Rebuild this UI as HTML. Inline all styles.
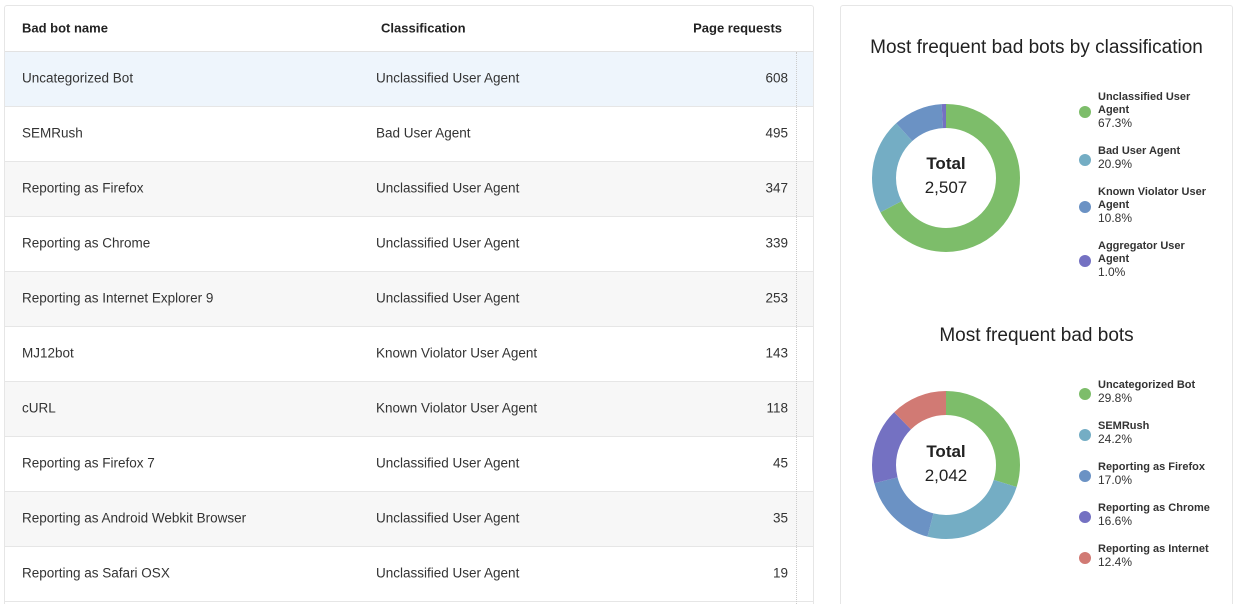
<!DOCTYPE html>
<html><head><style>
*{margin:0;padding:0;box-sizing:border-box}
html,body{width:1236px;height:604px;overflow:hidden}
body{background:#fff;font-family:"Liberation Sans",sans-serif;color:#333;position:relative}
.lp{position:absolute;left:4px;top:5px;width:810px;height:599px;border:1px solid #e6e6e6;border-bottom:none;border-radius:3px 3px 0 0;background:#fff;overflow:hidden}
.hd{position:absolute;left:0;top:0;width:100%;height:46px;border-bottom:1px solid #e2e2e2;font-size:13px;font-weight:bold;color:#222}
.row{position:absolute;left:0;width:100%;height:55px;border-bottom:1px solid #e6e6e6;font-size:13.5px;color:#333}
.c1{position:absolute;left:17px;top:calc(50% - 1px);transform:translateY(-50%)}
.c2{position:absolute;left:371px;top:calc(50% - 1px);transform:translateY(-50%)}
.c3{position:absolute;right:25px;top:calc(50% - 1px);transform:translateY(-50%)}
.vl{position:absolute;left:791px;top:46px;width:0;height:600px;border-left:1px dotted #ccc}
.rp{position:absolute;left:840px;top:5px;width:393px;height:599px;border:1px solid #e6e6e6;border-bottom:none;border-radius:3px 3px 0 0;background:#fff}
.t{position:absolute;width:100%;text-align:center;font-size:19px;color:#222}
.lg{position:absolute;left:257px;font-size:11px;font-weight:bold;color:#333;line-height:13px}
.lg span{font-weight:normal;font-size:12px}
.dot{position:absolute;left:-19px;width:12px;height:12px;border-radius:50%}
.tot{position:absolute;width:100px;text-align:center;left:55px}
</style></head><body>
<div class="lp">
<div class="hd"><span class="c1">Bad bot name</span><span class="c2" style="left:376px">Classification</span><span class="c3" style="right:31px">Page requests</span></div>
<div class="row" style="top:46px;background:#eef5fc"><span class="c1">Uncategorized Bot</span><span class="c2">Unclassified User Agent</span><span class="c3">608</span></div>
<div class="row" style="top:101px"><span class="c1">SEMRush</span><span class="c2">Bad User Agent</span><span class="c3">495</span></div>
<div class="row" style="top:156px;background:#f7f7f7"><span class="c1">Reporting as Firefox</span><span class="c2">Unclassified User Agent</span><span class="c3">347</span></div>
<div class="row" style="top:211px"><span class="c1">Reporting as Chrome</span><span class="c2">Unclassified User Agent</span><span class="c3">339</span></div>
<div class="row" style="top:266px;background:#f7f7f7"><span class="c1">Reporting as Internet Explorer 9</span><span class="c2">Unclassified User Agent</span><span class="c3">253</span></div>
<div class="row" style="top:321px"><span class="c1">MJ12bot</span><span class="c2">Known Violator User Agent</span><span class="c3">143</span></div>
<div class="row" style="top:376px;background:#f7f7f7"><span class="c1">cURL</span><span class="c2">Known Violator User Agent</span><span class="c3">118</span></div>
<div class="row" style="top:431px"><span class="c1">Reporting as Firefox 7</span><span class="c2">Unclassified User Agent</span><span class="c3">45</span></div>
<div class="row" style="top:486px;background:#f7f7f7"><span class="c1">Reporting as Android Webkit Browser</span><span class="c2">Unclassified User Agent</span><span class="c3">35</span></div>
<div class="row" style="top:541px"><span class="c1">Reporting as Safari OSX</span><span class="c2">Unclassified User Agent</span><span class="c3">19</span></div>
<div class="vl"></div>
</div>
<div class="rp">
<div class="t" style="top:31px">Most frequent bad bots by classification</div>
<svg style="position:absolute;left:30px;top:97px" width="150" height="150" viewBox="0 0 150 150">
<g transform="rotate(-90 75 75)" fill="none" stroke-width="24">
<circle cx="75" cy="75" r="62" stroke="#7dbd6a" stroke-dasharray="262.2 389.6" stroke-dashoffset="0"/>
<circle cx="75" cy="75" r="62" stroke="#74adc4" stroke-dasharray="81.4 389.6" stroke-dashoffset="-262.2"/>
<circle cx="75" cy="75" r="62" stroke="#6b92c4" stroke-dasharray="42.1 389.6" stroke-dashoffset="-343.6"/>
<circle cx="75" cy="75" r="62" stroke="#7471c2" stroke-dasharray="3.9 389.6" stroke-dashoffset="-385.7"/>
</g></svg>
<div class="tot" style="top:148px;font-size:17px;font-weight:bold;color:#222">Total</div>
<div class="tot" style="top:172px;font-size:17px;color:#222">2,507</div>
<div class="lg" style="top:85px"><i class="dot" style="top:15px;background:#7dbd6a"></i>Unclassified User<br>Agent<br><span>67.3%</span></div>
<div class="lg" style="top:139px"><i class="dot" style="top:9px;background:#74adc4"></i>Bad User Agent<br><span>20.9%</span></div>
<div class="lg" style="top:180px"><i class="dot" style="top:15px;background:#6b92c4"></i>Known Violator User<br>Agent<br><span>10.8%</span></div>
<div class="lg" style="top:234px"><i class="dot" style="top:15px;background:#7471c2"></i>Aggregator User<br>Agent<br><span>1.0%</span></div>

<div class="t" style="top:319px">Most frequent bad bots</div>
<svg style="position:absolute;left:30px;top:384px" width="150" height="150" viewBox="0 0 150 150">
<g transform="rotate(-90 75 75)" fill="none" stroke-width="24">
<circle cx="75" cy="75" r="62" stroke="#7dbd6a" stroke-dasharray="116.1 389.6" stroke-dashoffset="0"/>
<circle cx="75" cy="75" r="62" stroke="#74adc4" stroke-dasharray="94.3 389.6" stroke-dashoffset="-116.1"/>
<circle cx="75" cy="75" r="62" stroke="#6b92c4" stroke-dasharray="66.2 389.6" stroke-dashoffset="-210.4"/>
<circle cx="75" cy="75" r="62" stroke="#7471c2" stroke-dasharray="64.7 389.6" stroke-dashoffset="-276.6"/>
<circle cx="75" cy="75" r="62" stroke="#d17a74" stroke-dasharray="48.3 389.6" stroke-dashoffset="-341.3"/>
</g></svg>
<div class="tot" style="top:436px;font-size:17px;font-weight:bold;color:#222">Total</div>
<div class="tot" style="top:460px;font-size:17px;color:#222">2,042</div>
<div class="lg" style="top:373px"><i class="dot" style="top:9px;background:#7dbd6a"></i>Uncategorized Bot<br><span>29.8%</span></div>
<div class="lg" style="top:414px"><i class="dot" style="top:9px;background:#74adc4"></i>SEMRush<br><span>24.2%</span></div>
<div class="lg" style="top:455px"><i class="dot" style="top:9px;background:#6b92c4"></i>Reporting as Firefox<br><span>17.0%</span></div>
<div class="lg" style="top:496px"><i class="dot" style="top:9px;background:#7471c2"></i>Reporting as Chrome<br><span>16.6%</span></div>
<div class="lg" style="top:537px"><i class="dot" style="top:9px;background:#d17a74"></i>Reporting as Internet<br><span>12.4%</span></div>
</div>
</body></html>
